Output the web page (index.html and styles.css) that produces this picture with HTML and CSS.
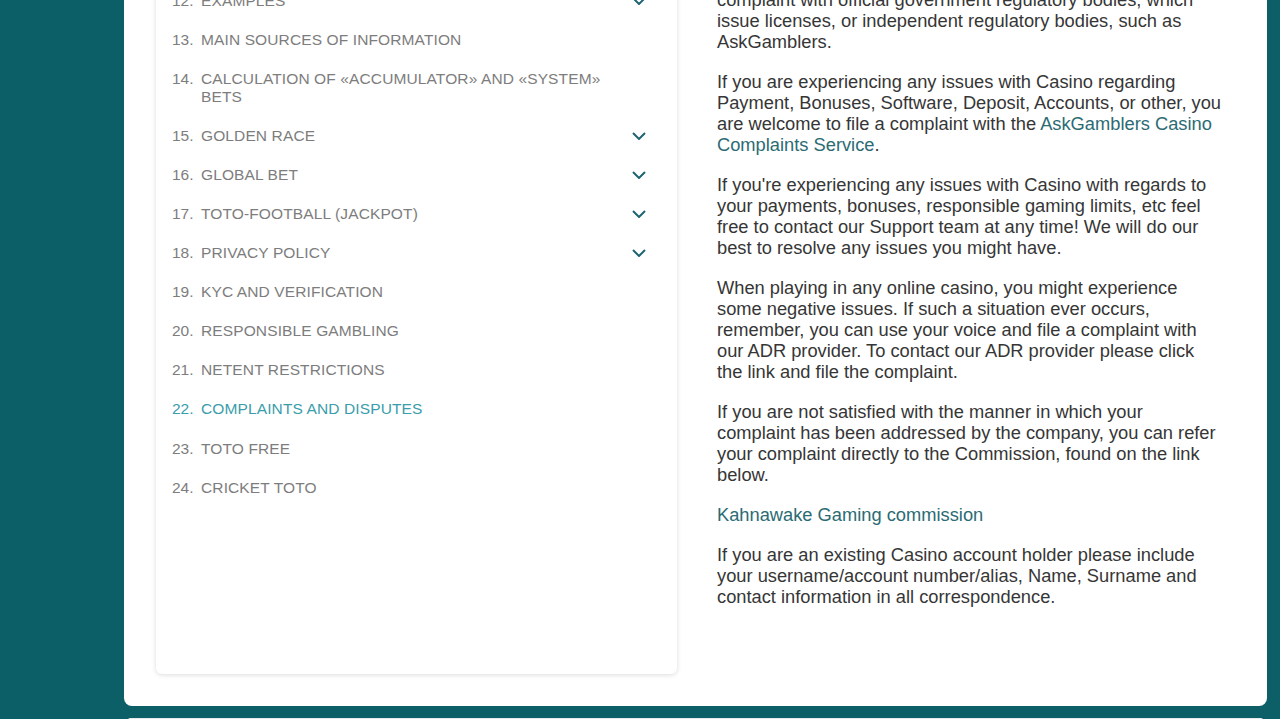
FILE: index.html
```html
<!DOCTYPE html>
<html lang="en">
<head>
<meta charset="utf-8">
<title>Complaints and Disputes</title>
<link rel="stylesheet" href="styles.css">
</head>
<body>
<div class="page">
  <main class="panel">
    <aside class="toc">
      <ol class="toc-list">
        <li class="toc-item"><span class="num">12.</span><span class="label">EXAMPLES</span><span class="chev"><svg viewBox="0 0 14 8" width="14" height="8"><path d="M1 1 L7 7 L13 1"/></svg></span></li>
        <li class="toc-item"><span class="num">13.</span><span class="label">MAIN SOURCES OF INFORMATION</span></li>
        <li class="toc-item"><span class="num">14.</span><span class="label">CALCULATION OF «ACCUMULATOR» AND «SYSTEM» BETS</span></li>
        <li class="toc-item"><span class="num">15.</span><span class="label">GOLDEN RACE</span><span class="chev"><svg viewBox="0 0 14 8" width="14" height="8"><path d="M1 1 L7 7 L13 1"/></svg></span></li>
        <li class="toc-item"><span class="num">16.</span><span class="label">GLOBAL BET</span><span class="chev"><svg viewBox="0 0 14 8" width="14" height="8"><path d="M1 1 L7 7 L13 1"/></svg></span></li>
        <li class="toc-item"><span class="num">17.</span><span class="label">TOTO-FOOTBALL (JACKPOT)</span><span class="chev"><svg viewBox="0 0 14 8" width="14" height="8"><path d="M1 1 L7 7 L13 1"/></svg></span></li>
        <li class="toc-item"><span class="num">18.</span><span class="label">PRIVACY POLICY</span><span class="chev"><svg viewBox="0 0 14 8" width="14" height="8"><path d="M1 1 L7 7 L13 1"/></svg></span></li>
        <li class="toc-item"><span class="num">19.</span><span class="label">KYC AND VERIFICATION</span></li>
        <li class="toc-item"><span class="num">20.</span><span class="label">RESPONSIBLE GAMBLING</span></li>
        <li class="toc-item"><span class="num">21.</span><span class="label">NETENT RESTRICTIONS</span></li>
        <li class="toc-item active"><span class="num">22.</span><span class="label">COMPLAINTS AND DISPUTES</span></li>
        <li class="toc-item"><span class="num">23.</span><span class="label">TOTO FREE</span></li>
        <li class="toc-item"><span class="num">24.</span><span class="label">CRICKET TOTO</span></li>
      </ol>
    </aside>
    <article class="content">
      <p>complaint with official government regulatory bodies, which issue licenses, or independent regulatory bodies, such as AskGamblers.</p>
      <p>If you are experiencing any issues with Casino regarding Payment, Bonuses, Software, Deposit, Accounts, or other, you are welcome to file a complaint with the <a href="#" class="link">AskGamblers Casino Complaints Service</a>.</p>
      <p>If you're experiencing any issues with Casino with regards to your payments, bonuses, responsible gaming limits, etc feel free to contact our Support team at any time! We will do our best to resolve any issues you might have.</p>
      <p>When playing in any online casino, you might experience some negative issues. If such a situation ever occurs, remember, you can use your voice and file a complaint with our ADR provider. To contact our ADR provider please click the link and file the complaint.</p>
      <p>If you are not satisfied with the manner in which your complaint has been addressed by the company, you can refer your complaint directly to the Commission, found on the link below.</p>
      <p><a href="#" class="link">Kahnawake Gaming commission</a></p>
      <p>If you are an existing Casino account holder please include your username/account number/alias, Name, Surname and contact information in all correspondence.</p>
    </article>
  </main>
  <section class="panel-next"></section>
</div>
</body>
</html>
```

FILE: styles.css
```css
html, body {
  margin: 0;
  padding: 0;
}
body {
  background: #0c5f67;
  font-family: "Liberation Sans", Arial, sans-serif;
  overflow: hidden;
  height: 719px;
}
.page {
  padding: 0 13px 0 124px;
}
.panel {
  margin-top: -40px;
  background: #ffffff;
  border-radius: 0 0 8px 8px;
  display: flex;
  align-items: flex-start;
  padding: 0 44px 32px 32px;
  gap: 40px;
}
.toc {
  width: 521px;
  flex: none;
  background: #fff;
  border-radius: 6px;
  box-shadow: 0 1px 5px rgba(0, 0, 0, 0.14);
  padding: 21px 31px 166.5px 16px;
  box-sizing: border-box;
}
.toc-list {
  list-style: none;
  margin: 0;
  padding: 0;
}
.toc-item {
  display: flex;
  align-items: flex-start;
  padding: 10.55px 0;
  font-size: 15.5px;
  letter-spacing: 0.12px;
  line-height: 18px;
  color: #7d7d7d;
  text-transform: uppercase;
}
.toc-item .num {
  width: 29px;
  flex: none;
  letter-spacing: 0;
}
.toc-item .label {
  flex: 1;
  padding-right: 12px;
}
.toc-item .chev {
  flex: none;
  width: 14px;
  height: 18px;
  display: flex;
  align-items: center;
}
.chev svg {
  display: block;
}
.chev path {
  fill: none;
  stroke: #1f6472;
  stroke-width: 2;
}
.toc-item.active {
  color: #3a9dab;
}
.content {
  flex: 1;
  min-width: 0;
  padding-top: 28.5px;
  font-size: 18.3px;
  line-height: 21px;
  color: #363636;
}
.content p {
  margin: 0 0 19px;
}
.link {
  color: #2b6b74;
  text-decoration: none;
}
.panel-next {
  margin-top: 12px;
  height: 40px;
  background: #ffffff;
  border-radius: 8px 8px 0 0;
  box-shadow: inset 0 2px 0 #e6eaea;
}
```
